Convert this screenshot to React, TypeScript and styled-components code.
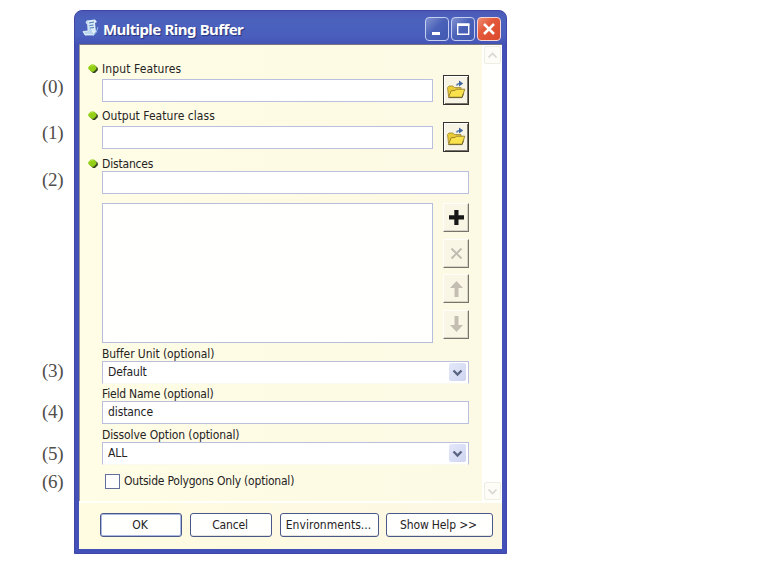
import React from "react";
import styled, { createGlobalStyle } from "styled-components";

const GlobalStyle = createGlobalStyle`
  * { box-sizing: border-box; }
  body { margin: 0; background: #fff; overflow: hidden; }
  button, input { font: inherit; color: inherit; }
  svg { display: block; flex: none; }
`;

const Page = styled.main`
  width: 763px;
  height: 565px;
  display: flex;
  align-items: flex-start;
  background: #fff;
  font: 12px/16px "DejaVu Sans Condensed", "DejaVu Sans", sans-serif;
  color: #25231f;
`;

const Indexes = styled.div`
  width: 74px;
  padding: 76px 0 0 42px;
  font: 19px/22px "Liberation Serif", serif;
  color: #504e4a;
`;

const Index = styled.div<{ $gap: number }>`
  height: 22px;
  margin-top: ${(p) => p.$gap}px;
  white-space: nowrap;
  letter-spacing: -0.3px;
`;

const Window = styled.section`
  width: 433px;
  height: 544px;
  margin-top: 10px;
  padding: 0 4px 4px;
  display: flex;
  flex-direction: column;
  overflow: hidden;
  background: #4250b8;
  border: 1px solid #4046a8;
  border-radius: 8px 8px 0 0;
`;

const TitleBar = styled.header`
  height: 33px;
  flex: none;
  display: flex;
  align-items: center;
  padding: 1px 1px 1px 3px;
  margin: 0 -4px;
  padding-left: 7px;
  background: linear-gradient(#4a58b6, #4b62bd 25%, #4a5fbd 75%, #4453b6);
`;

const Title = styled.h1`
  flex: 1;
  margin: 3px 0 0 4px;
  font: bold 15px/20px "Noto Sans", sans-serif;
  letter-spacing: -0.58px;
  word-spacing: 0.6px;
  white-space: nowrap;
  color: #fff;
  text-shadow: 1px 1px 1px #26337d;
`;

const Controls = styled.div`
  display: flex;
  gap: 2px;
  margin: 3px 4px 0 0;
`;

const ControlButton = styled.button<{ $close?: boolean }>`
  width: 24px;
  height: 24px;
  padding: 0;
  display: grid;
  place-items: center;
  border: 1.5px solid ${(p) => (p.$close ? "#f4d6d9" : "#c6cff0")};
  border-radius: 4px;
  background: ${(p) =>
    p.$close
      ? "linear-gradient(135deg, #eb8d72, #e4583a 40%, #dc492c)"
      : "linear-gradient(135deg, #8292d1, #4b62b8 45%, #4158b2)"};
`;

const Body = styled.div`
  height: 457px;
  flex: none;
  display: flex;
  border-top: 1px solid #77737f;
  border-left: 1px solid #a29b91;
  background: linear-gradient(90deg, #fffde5, #fcf9e4);
`;

const Form = styled.div`
  width: 402px;
  padding: 16px 13px 0 8px;
  flex: none;
`;

const Field = styled.div<{ $gap?: number }>`
  margin-top: ${(p) => p.$gap ?? 0}px;
`;

const LabelRow = styled.label<{ $height?: number }>`
  height: ${(p) => p.$height ?? 18}px;
  display: flex;
  align-items: flex-start;
  white-space: nowrap;
`;

const LabelText = styled.span<{ $track: number }>`
  letter-spacing: ${(p) => p.$track}px;
`;

const BulletSlot = styled.span`
  width: 14px;
  height: 16px;
  display: flex;
  align-items: center;
  flex: none;
`;

const FieldRow = styled.div`
  display: flex;
  align-items: center;
  justify-content: space-between;
  padding-left: 14px;
  height: 23px;
`;

const TextInput = styled.input<{ $wide?: boolean }>`
  width: ${(p) => (p.$wide ? 367 : 331)}px;
  height: 23px;
  padding: 0 5px 1px;
  border: 1px solid #b9bfdc;
  background: #fff;
  outline: none;
  letter-spacing: -0.1px;
`;

const SelectBox = styled.div`
  width: 367px;
  height: 23px;
  display: flex;
  align-items: center;
  justify-content: space-between;
  padding: 0 2px 1px 5px;
  border: 1px solid #b9bfdc;
  border-bottom-color: #fbfaf0;
  background: #fff;
  letter-spacing: -0.1px;
`;

const Drop = styled.span`
  width: 17px;
  height: 18px;
  display: grid;
  place-items: center;
  border-radius: 2px;
  background: linear-gradient(135deg, #e4e8fa, #ced5f0);
`;

const FolderButton = styled.button`
  width: 26px;
  height: 30px;
  margin-top: -1px;
  padding: 0;
  display: grid;
  place-items: center;
  flex: none;
  border: 1px solid #35322e;
  background: #f7f3e5;
  box-shadow: inset 1px 1px #fff, inset -1px -1px #77736a;
`;

const ListRow = styled.div`
  display: flex;
  justify-content: space-between;
  padding-left: 14px;
  margin-top: 9px;
`;

const DistanceList = styled.div`
  width: 331px;
  height: 140px;
  border: 1px solid #b6bcdb;
  background: #fffffd;
`;

const Tools = styled.div`
  display: flex;
  flex-direction: column;
  justify-content: space-between;
  height: 136px;
`;

const ToolButton = styled.button`
  width: 26px;
  height: 29px;
  padding: 0;
  display: grid;
  place-items: center;
  border: 1px solid #fffefa;
  border-right: 1.5px solid #77746b;
  border-bottom: 1.5px solid #77746b;
  background: #faf6e5;
  box-shadow: inset -1px -1px #d8d3c5;
`;

const CheckRow = styled.label`
  display: flex;
  align-items: center;
  gap: 4px;
  height: 16px;
  margin: 8px 0 0 17px;
  white-space: nowrap;
`;

const CheckBox = styled.span`
  width: 15px;
  height: 15px;
  border: 1px solid #626e9b;
  background: #fff;
`;

const ScrollBar = styled.div`
  flex: 1;
  display: flex;
  flex-direction: column;
  justify-content: space-between;
  background: #fffffd;
`;

const ScrollButton = styled.span`
  width: 17px;
  height: 18px;
  display: grid;
  place-items: center;
  margin: 1px 0 1px 2px;
  border: 1px solid #f0ede2;
  border-radius: 2px;
  background: #fdfcf6;
`;

const Footer = styled.footer`
  flex: 1;
  display: flex;
  padding: 10px 0 0 21px;
  border-top: 2px solid #fffffb;
  background: linear-gradient(90deg, #fffce1, #fbf7e3);
`;

const ActionButton = styled.button<{ $width: number; $gap?: number; $primary?: boolean; $track?: number }>`
  width: ${(p) => p.$width}px;
  height: 24px;
  margin-left: ${(p) => p.$gap ?? 0}px;
  padding: 0 2px 1px 0;
  border: 1px solid #495889;
  border-radius: 3px;
  background: #fffffd;
  box-shadow: ${(p) => (p.$primary ? "inset 0 0 0 1px #aab8e2" : "inset 0 -1px #e4e2dc")};
  letter-spacing: ${(p) => p.$track ?? -0.15}px;
  white-space: nowrap;
`;

const ScriptIcon = () => (
  <svg width="17" height="20" viewBox="0 0 17 20">
    <path d="M5 2.5 13 1.5 15 4l-2 1 1 9-3 3-8 .5L1 14l5-1z" fill="#dcecf8" />
    <path d="M5 2.5 4 5l2 1v7l-5 .5 2 3 8 .5 1-2-2-2" fill="#b9d6ee" stroke="#f5fbff" strokeWidth=".7" />
    <path d="m7 5 5-1M7.5 7.5l4-.5M8 10l4-.5" stroke="#477ab4" strokeWidth="1" />
    <path d="M16 9q-1 6-5 9" fill="none" stroke="#94bce4" />
  </svg>
);

const Bullet = () => (
  <svg width="11" height="10" viewBox="0 0 11 10">
    <path d="M5 1.5h2L9.8 4v2.2L7 9H5L2 6.3z" fill="#344522" />
    <path d="M3 .4h3L8.4 3v2L5.6 7.8H3.5L.3 5V3z" fill="#94cf18" />
    <path d="m2 2.6 1.5-1.1 2 .3" fill="none" stroke="#b2e63c" strokeWidth=".9" />
  </svg>
);

const FolderIcon = () => (
  <svg width="20" height="20" viewBox="0 0 20 20">
    <path d="M1.5 7.5 3 6h4l1.3 1.5H15V16H2.5z" fill="#e9cb35" stroke="#9f8831" strokeWidth=".8" />
    <path d="m2.5 17.2 2.7-6.4 4-.4 1-1.2h8.6l-2.7 8z" fill="#fae24d" stroke="#94792a" strokeWidth=".9" />
    <path d="M2.5 17.6h13.6l1.5-4" fill="none" stroke="#5f541f" strokeWidth=".8" />
    <path d="M10.5 5.5q.8-2.4 4-2" fill="none" stroke="#597cae" strokeWidth="1.6" />
    <path d="m13 .6 4.2 3-4.2 3z" fill="#3f64a0" />
  </svg>
);

const PlusIcon = () => (
  <svg width="17" height="17" viewBox="0 0 17 17">
    <path d="M6.3 1h4.2v5.3H16v4.2h-5.5V16H6.3v-5.5H1V6.3h5.3z" fill="#181818" />
  </svg>
);

const CrossIcon = () => (
  <svg width="13" height="13" viewBox="0 0 13 13">
    <path d="m1.5 1.5 10 10m0-10-10 10" stroke="#c1bbb0" strokeWidth="1.9" />
  </svg>
);

const ArrowIcon = ({ down = false }: { down?: boolean }) => (
  <svg width="15" height="18" viewBox="0 0 15 18">
    <path
      d={down ? "M5.5 1h4v9H14l-6.5 7L1 10h4.5z" : "M7.5 1 14 8H9.5v9h-4V8H1z"}
      fill="#c4beb2"
    />
  </svg>
);

const Chevron = ({ up = false, pale = false }: { up?: boolean; pale?: boolean }) => (
  <svg width="11" height="9" viewBox="0 0 11 9">
    <path
      d={up ? "m1.5 6.5 4-4 4 4" : "m1.5 2.5 4 4 4-4"}
      fill="none"
      stroke={pale ? "#d9d7d1" : "#596382"}
      strokeWidth={pale ? 1.7 : 2.3}
    />
  </svg>
);

const indexes = [0, 24, 25, 169, 19, 20, 6];

const fileFields = [
  { label: "Input Features", gap: 0, track: 0.11 },
  { label: "Output Feature class", gap: 6, track: 0.05 },
];

export default function App() {
  return (
    <>
      <GlobalStyle />
      <Page>
        <Indexes>
          {indexes.map((gap, i) => (
            <Index key={i} $gap={gap}>({i})</Index>
          ))}
        </Indexes>
        <Window>
          <TitleBar>
            <ScriptIcon />
            <Title>Multiple Ring Buffer</Title>
            <Controls>
              <ControlButton aria-label="Minimize">
                <svg width="18" height="18" viewBox="0 0 18 18"><path d="M4 12h8v3H4z" fill="#fff" /></svg>
              </ControlButton>
              <ControlButton aria-label="Maximize">
                <svg width="18" height="18" viewBox="0 0 18 18"><path d="M3.7 4.2h11v10h-11z" fill="none" stroke="#fff" strokeWidth="1.4" /><path d="M3 3.5h12.4V6H3z" fill="#fff" /></svg>
              </ControlButton>
              <ControlButton $close aria-label="Close">
                <svg width="18" height="18" viewBox="0 0 18 18"><path d="m4 4 10 10m0-10L4 14" stroke="#fff" strokeWidth="2.5" /></svg>
              </ControlButton>
            </Controls>
          </TitleBar>
          <Body>
            <Form>
              {fileFields.map(({ label, gap, track }) => (
                <Field key={label} $gap={gap}>
                  <LabelRow>
                    <BulletSlot><Bullet /></BulletSlot>
                    <LabelText $track={track}>{label}</LabelText>
                  </LabelRow>
                  <FieldRow>
                    <TextInput aria-label={label} />
                    <FolderButton aria-label="Browse"><FolderIcon /></FolderButton>
                  </FieldRow>
                </Field>
              ))}
              <Field $gap={7}>
                <LabelRow $height={15}>
                  <BulletSlot><Bullet /></BulletSlot>
                  <LabelText $track={-0.18}>Distances</LabelText>
                </LabelRow>
                <FieldRow><TextInput $wide aria-label="Distances" /></FieldRow>
              </Field>
              <ListRow>
                <DistanceList />
                <Tools>
                  <ToolButton aria-label="Add"><PlusIcon /></ToolButton>
                  <ToolButton aria-label="Remove"><CrossIcon /></ToolButton>
                  <ToolButton aria-label="Move up"><ArrowIcon /></ToolButton>
                  <ToolButton aria-label="Move down"><ArrowIcon down /></ToolButton>
                </Tools>
              </ListRow>
              <Field $gap={3}>
                <LabelRow $height={15}><BulletSlot /><LabelText $track={-0.07}>Buffer Unit (optional)</LabelText></LabelRow>
                <FieldRow><SelectBox>Default<Drop><Chevron /></Drop></SelectBox></FieldRow>
              </Field>
              <Field $gap={2}>
                <LabelRow $height={15}><BulletSlot /><LabelText $track={-0.2}>Field Name (optional)</LabelText></LabelRow>
                <FieldRow><TextInput $wide defaultValue="distance" aria-label="Field Name" /></FieldRow>
              </Field>
              <Field $gap={3}>
                <LabelRow $height={15}><BulletSlot /><LabelText $track={-0.11}>Dissolve Option (optional)</LabelText></LabelRow>
                <FieldRow><SelectBox>ALL<Drop><Chevron /></Drop></SelectBox></FieldRow>
              </Field>
              <CheckRow>
                <CheckBox />
                <LabelText $track={-0.21}>Outside Polygons Only (optional)</LabelText>
              </CheckRow>
            </Form>
            <ScrollBar>
              <ScrollButton><Chevron up pale /></ScrollButton>
              <ScrollButton><Chevron pale /></ScrollButton>
            </ScrollBar>
          </Body>
          <Footer>
            <ActionButton $width={82} $primary>OK</ActionButton>
            <ActionButton $width={82} $gap={8}>Cancel</ActionButton>
            <ActionButton $width={99} $gap={8} $track={0.05}>Environments...</ActionButton>
            <ActionButton $width={107} $gap={7}>Show Help &gt;&gt;</ActionButton>
          </Footer>
        </Window>
      </Page>
    </>
  );
}
